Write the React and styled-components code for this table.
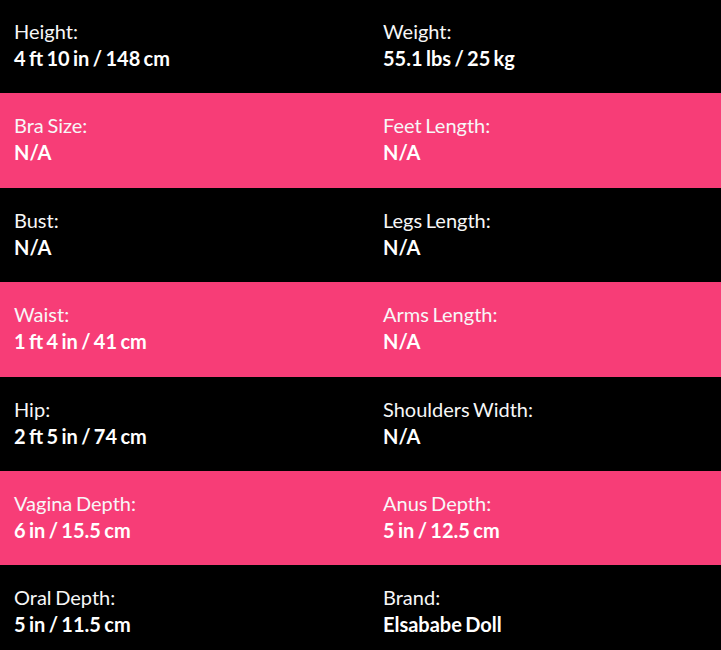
import styled, {createGlobalStyle} from "styled-components";

const GlobalStyle = createGlobalStyle`
  body {
    margin: 0;
    background: #000;
    font-family: Lato, "Liberation Sans", sans-serif;
  }
`;

const specs = [
    ["Height:", "4 ft 10 in / 148 cm", "Weight:", "55.1 lbs / 25 kg"],
    ["Bra Size:", "N/A", "Feet Length:", "N/A"],
    ["Bust:", "N/A", "Legs Length:", "N/A"],
    ["Waist:", "1 ft 4 in / 41 cm", "Arms Length:", "N/A"],
    ["Hip:", "2 ft 5 in / 74 cm", "Shoulders Width:", "N/A"],
    ["Vagina Depth:", "6 in / 15.5 cm", "Anus Depth:", "5 in / 12.5 cm"],
    ["Oral Depth:", "5 in / 11.5 cm", "Brand:", "Elsababe Doll"],
];

const Table = styled.div`
  margin-top: -1px;
  width: 721px;
`;

const Row = styled.div`
  display: grid;
  grid-template-columns: 369px 1fr;
  height: 94.4px;
  box-sizing: border-box;
  padding-top: 19px;
  background: ${({$pink}) => ($pink ? "#f73d77" : "#000")};
`;

const Cell = styled.div`
  padding-left: 14px;
  color: #f7f7f7;
  font-size: 20px;
  line-height: 27px;
  word-spacing: -1.5px;
`;

const Label = styled.div`
  font-weight: 400;
`;

const Value = styled.div`
  font-weight: 700;
  color: #fff;
`;

function App() {
    return (
        <>
            <GlobalStyle/>
            <Table>
                {specs.map(([l1, v1, l2, v2], i) => (
                    <Row key={l1} $pink={i % 2 === 1}>
                        <Cell>
                            <Label>{l1}</Label>
                            <Value>{v1}</Value>
                        </Cell>
                        <Cell>
                            <Label>{l2}</Label>
                            <Value>{v2}</Value>
                        </Cell>
                    </Row>
                ))}
            </Table>
        </>
    );
}

export default App;
